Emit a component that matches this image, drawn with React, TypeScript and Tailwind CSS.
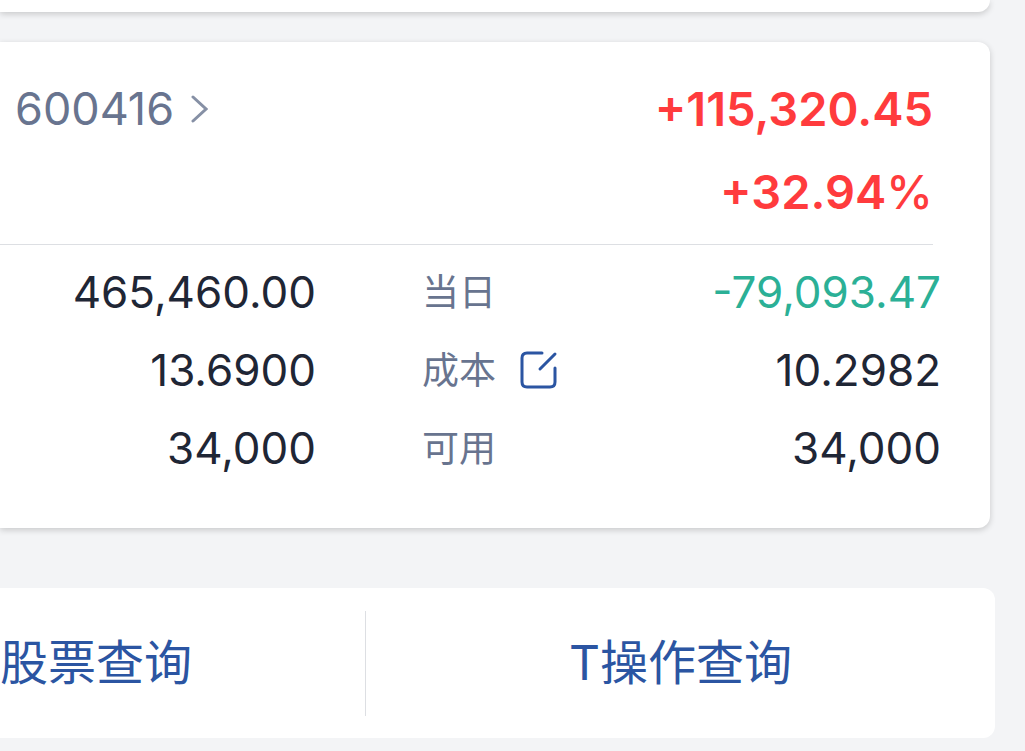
import React from 'react'

const rows = [
  { left: '465,460.00', label: '当日', right: '-79,093.47', editable: false, loss: true },
  { left: '13.6900', label: '成本', right: '10.2982', editable: true, loss: false },
  { left: '34,000', label: '可用', right: '34,000', editable: false, loss: false },
]

function EditIcon() {
  return (
    <svg viewBox="0 0 38 38" className="size-[38px]" fill="none" stroke="#2b55a2" strokeWidth="3" strokeLinecap="round">
      <path d="M22 2H7Q2 2 2 7V31Q2 36 7 36H30Q35 36 35 31V17" />
      <path d="M20 18L35 3" />
    </svg>
  )
}

export default function App() {
  return (
    <main className="min-h-screen overflow-x-hidden bg-[#f3f4f6] pr-[35px] pb-3 font-[Inter,'Noto_Sans_CJK_SC',sans-serif] text-[#1f2635]">
      <div className="h-3 rounded-br-xl bg-white shadow-[0_2px_6px_rgba(0,0,0,0.18)]" />

      <section className="mt-[30px] rounded-r-xl bg-white pb-[41px] shadow-[0_2px_6px_rgba(0,0,0,0.18)]">
        <header className="mr-[57px] flex items-start justify-between border-b border-[#dddfe3] pt-[25px] pb-[11px] pl-[15px]">
          <a href="#stock" className="flex h-[84px] items-center gap-4 text-[45px] text-[#68748f]">
            600416
            <svg viewBox="0 0 18 30" className="h-[30px] w-[18px]" fill="none" stroke="#8690a5" strokeWidth="3" strokeLinecap="round">
              <path d="M3 3L16 15L3 27" />
            </svg>
          </a>
          <div className="text-right text-[47px] leading-[83px] font-semibold text-[#ff3b3d]">
            <p>+115,320.45</p>
            <p>+32.94<span className="font-medium">%</span></p>
          </div>
        </header>

        <div className="mr-[49px] pt-2">
          {rows.map(row => (
            <div key={row.label} className="flex h-[78px] items-center text-[44px]">
              <span className="w-[316px] text-right">{row.left}</span>
              <span className="ml-[106px] pt-0.5 text-[37px] text-[#68748f]">{row.label}</span>
              {row.editable && (
                <button type="button" aria-label="修改成本" className="ml-6">
                  <EditIcon />
                </button>
              )}
              <span className={row.loss ? 'ml-auto text-[#2bb096]' : 'ml-auto'}>{row.right}</span>
            </div>
          ))}
        </div>
      </section>

      <nav className="mt-[60px] -mr-[5px] flex h-[150px] items-center rounded-r-xl bg-white text-[48px] text-[#2b55a2]">
        <button type="button" className="h-[105px] w-[366px] border-r border-[#dddfe3] text-left">股票查询</button>
        <button type="button" className="h-[105px] flex-1">T操作查询</button>
      </nav>
    </main>
  )
}
